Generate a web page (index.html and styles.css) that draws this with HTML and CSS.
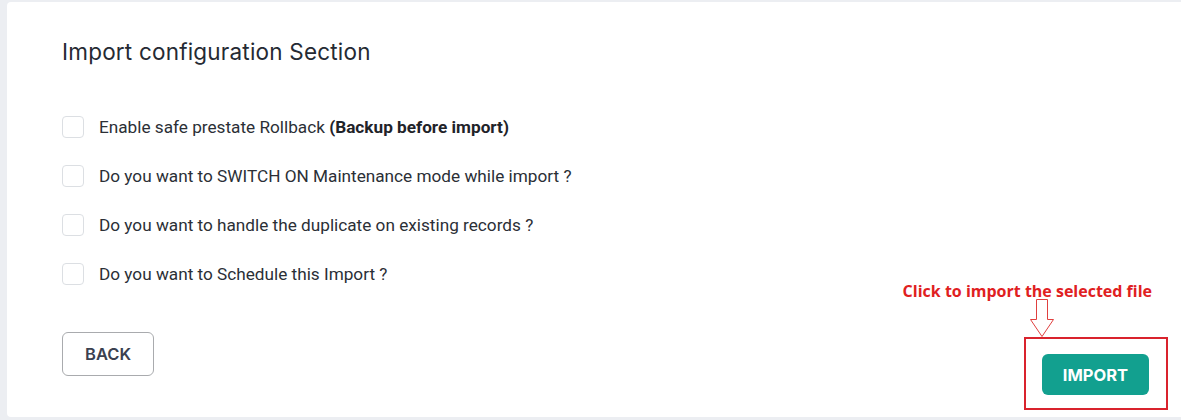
FILE: index.html
```html
<!DOCTYPE html>
<html>
<head>
<meta charset="utf-8">
<link rel="stylesheet" href="styles.css">
</head>
<body>
<div class="card">
  <h2 class="title">Import configuration Section</h2>
  <div class="options">
    <label class="opt"><span class="box"></span><span>Enable safe prestate Rollback <b>(Backup before import)</b></span></label>
    <label class="opt"><span class="box"></span><span>Do you want to SWITCH ON Maintenance mode while import ?</span></label>
    <label class="opt"><span class="box"></span><span>Do you want to handle the duplicate on existing records ?</span></label>
    <label class="opt"><span class="box"></span><span>Do you want to Schedule this Import ?</span></label>
  </div>
  <div class="footer">
    <button class="btn-back">BACK</button>
    <div class="highlight">
      <div class="note">Click to import the selected file</div>
      <svg class="arrow" width="26" height="40" viewBox="0 0 26 40"><path d="M7.5 0.5 H18.5 V20.5 H24.5 L13 37.5 L1.5 20.5 H7.5 Z" fill="#fff" stroke="#e0403f" stroke-width="1"/></svg>
      <button class="btn-import">IMPORT</button>
    </div>
  </div>
</div>
</body>
</html>
```
FILE: styles.css
```css
html, body { margin: 0; padding: 0; }
body {
  background: #eceef2;
  width: 1181px;
  height: 420px;
  overflow: hidden;
  font-family: Roboto, "Liberation Sans", sans-serif;
}
.card {
  background: #fff;
  margin: 2px 0 0 7px;
  height: 415px;
  box-sizing: border-box;
  padding: 36px 13px 0 55px;
  border-radius: 4px 0 0 4px;
  display: flex;
  flex-direction: column;
}
.title {
  margin: 0;
  font-family: Inter, "Open Sans", sans-serif;
  font-weight: 400;
  font-size: 22.5px;
  line-height: 28px;
  color: #252a33;
  letter-spacing: 0.2px;
}
.options {
  margin-top: 50px;
  display: flex;
  flex-direction: column;
  gap: 27px;
}
.opt {
  display: flex;
  align-items: center;
  gap: 15px;
  font-size: 17.2px;
  line-height: 22px;
  color: #2b2f36;
}
.opt b { font-weight: 700; color: #1f2329; }
.box {
  width: 20px;
  height: 20px;
  border: 1px solid #dcdfe3;
  border-radius: 4px;
  flex: none;
}
.footer {
  margin-top: 47px;
  display: flex;
  justify-content: space-between;
  align-items: flex-start;
}
.btn-back {
  width: 92px;
  height: 44px;
  background: #fff;
  border: 1px solid #a9abae;
  border-radius: 6px;
  font-family: Inter, "Open Sans", sans-serif;
  font-weight: 600;
  font-size: 16.5px;
  color: #3a4150;
  padding: 0;
}
.highlight {
  position: relative;
  margin-top: 5px;
  border: 2px solid #d9232d;
  padding: 15px 17px 13px 16px;
}
.btn-import {
  display: block;
  width: 107px;
  height: 41px;
  background: #12a08f;
  border: none;
  border-radius: 6px;
  color: #fff;
  font-family: Inter, "Open Sans", sans-serif;
  font-weight: 700;
  font-size: 16.5px;
  padding: 0;
}
.note {
  position: absolute;
  right: 14px;
  top: -59px;
  white-space: nowrap;
  font-family: "Open Sans", sans-serif;
  font-weight: 700;
  font-size: 16px;
  color: #e0201f;
}
.arrow {
  position: absolute;
  left: 3px;
  top: -40px;
}
```
